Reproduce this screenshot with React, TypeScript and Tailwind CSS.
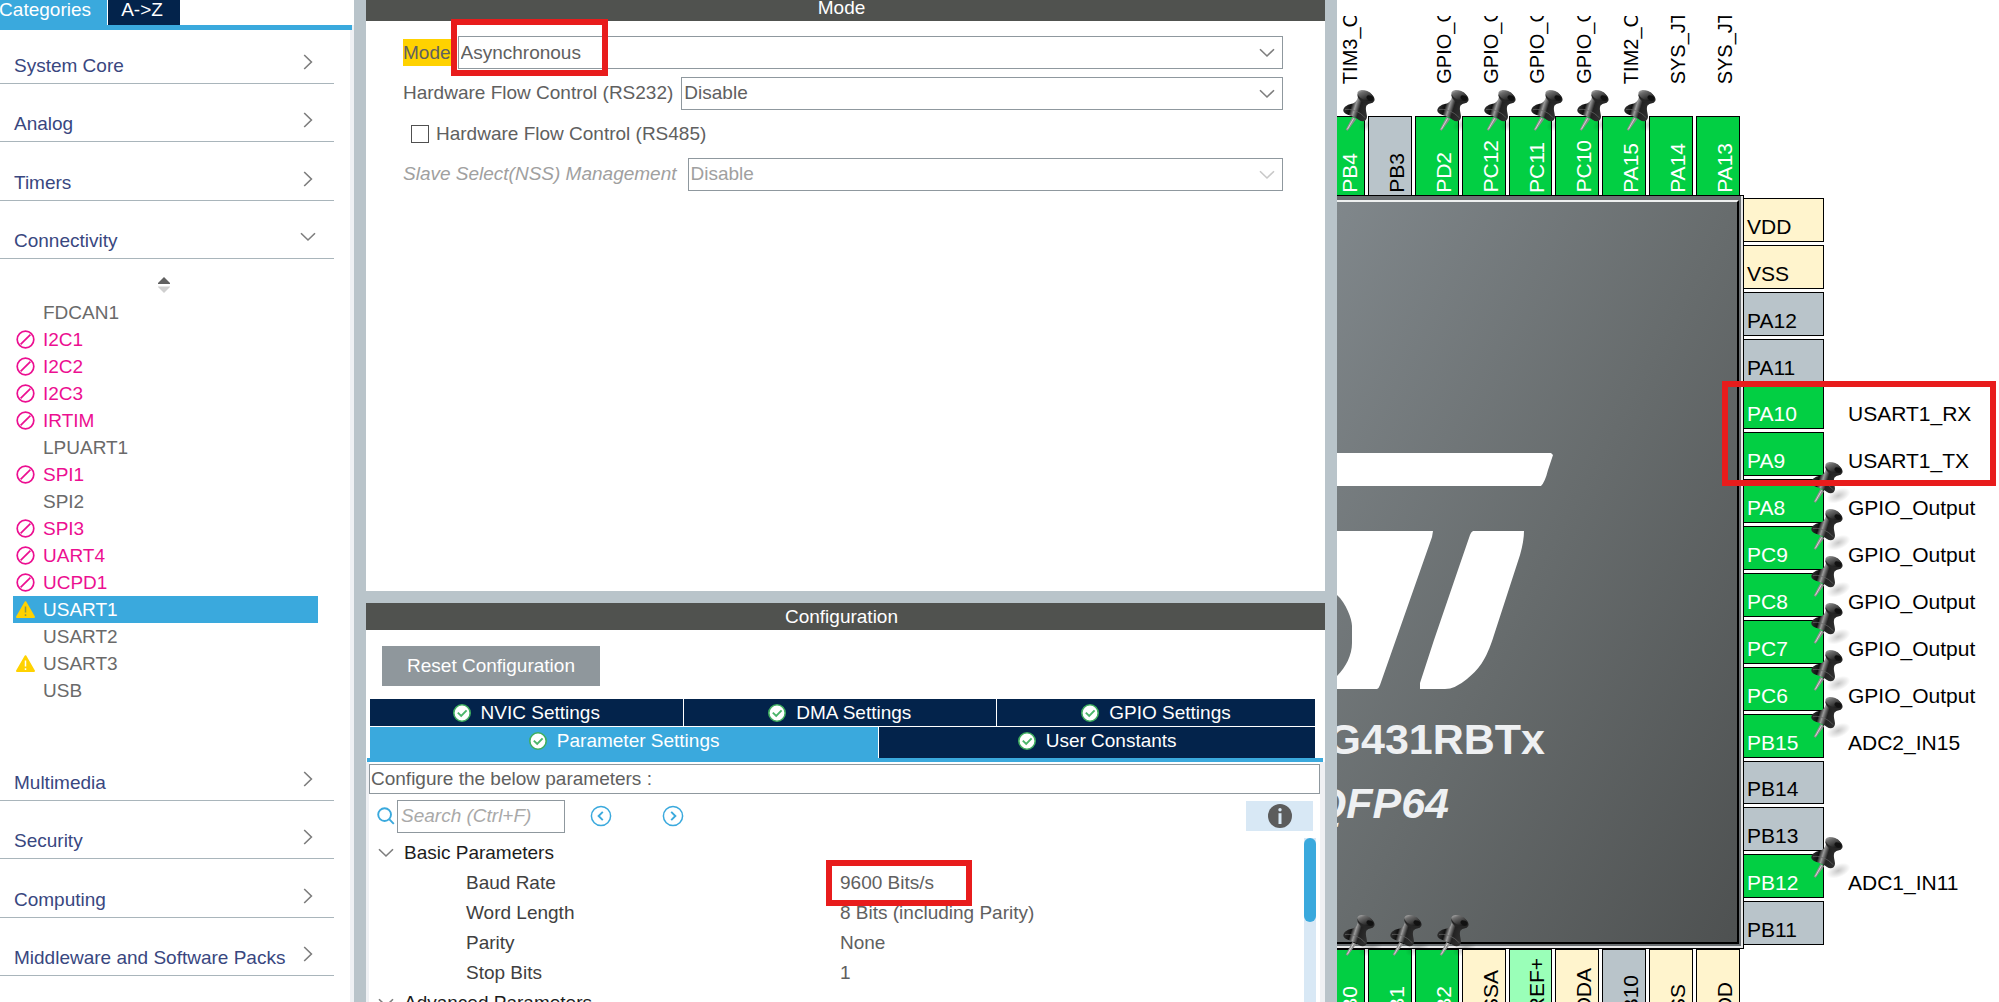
import React from "react";

type Tone = "green" | "gray" | "cream" | "mint";
type PinData = { name: string; tone: Tone; pinned?: boolean; label?: string };

const tones: Record<Tone, string> = {
  green: "bg-[#02cf43] text-white",
  gray: "bg-[#b9c4ca] text-black",
  cream: "bg-[#fff4cd] text-black",
  mint: "bg-[#9affb8] text-black",
};

const topPins: PinData[] = [
  { name: "PB4", tone: "green", pinned: true, label: "TIM3_C" },
  { name: "PB3", tone: "gray" },
  { name: "PD2", tone: "green", pinned: true, label: "GPIO_O" },
  { name: "PC12", tone: "green", pinned: true, label: "GPIO_O" },
  { name: "PC11", tone: "green", pinned: true, label: "GPIO_O" },
  { name: "PC10", tone: "green", pinned: true, label: "GPIO_O" },
  { name: "PA15", tone: "green", pinned: true, label: "TIM2_C" },
  { name: "PA14", tone: "green", label: "SYS_JT" },
  { name: "PA13", tone: "green", label: "SYS_JT" },
];

const rightPins: PinData[] = [
  { name: "VDD", tone: "cream" },
  { name: "VSS", tone: "cream" },
  { name: "PA12", tone: "gray" },
  { name: "PA11", tone: "gray" },
  { name: "PA10", tone: "green", label: "USART1_RX" },
  { name: "PA9", tone: "green", label: "USART1_TX" },
  { name: "PA8", tone: "green", pinned: true, label: "GPIO_Output" },
  { name: "PC9", tone: "green", pinned: true, label: "GPIO_Output" },
  { name: "PC8", tone: "green", pinned: true, label: "GPIO_Output" },
  { name: "PC7", tone: "green", pinned: true, label: "GPIO_Output" },
  { name: "PC6", tone: "green", pinned: true, label: "GPIO_Output" },
  { name: "PB15", tone: "green", pinned: true, label: "ADC2_IN15" },
  { name: "PB14", tone: "gray" },
  { name: "PB13", tone: "gray" },
  { name: "PB12", tone: "green", pinned: true, label: "ADC1_IN11" },
  { name: "PB11", tone: "gray" },
];

const bottomPins: PinData[] = [
  { name: "PB0", tone: "green", pinned: true },
  { name: "PB1", tone: "green", pinned: true },
  { name: "PB2", tone: "green", pinned: true },
  { name: "VSSA", tone: "cream" },
  { name: "VREF+", tone: "mint" },
  { name: "VDDA", tone: "cream" },
  { name: "PB10", tone: "gray" },
  { name: "VSS", tone: "cream" },
  { name: "VDD", tone: "cream" },
];

type Status = "blocked" | "warning" | "none";
const peripherals: { name: string; status: Status; selected?: boolean }[] = [
  { name: "FDCAN1", status: "none" },
  { name: "I2C1", status: "blocked" },
  { name: "I2C2", status: "blocked" },
  { name: "I2C3", status: "blocked" },
  { name: "IRTIM", status: "blocked" },
  { name: "LPUART1", status: "none" },
  { name: "SPI1", status: "blocked" },
  { name: "SPI2", status: "none" },
  { name: "SPI3", status: "blocked" },
  { name: "UART4", status: "blocked" },
  { name: "UCPD1", status: "blocked" },
  { name: "USART1", status: "warning", selected: true },
  { name: "USART2", status: "none" },
  { name: "USART3", status: "warning" },
  { name: "USB", status: "none" },
];

const parameters = [
  { name: "Baud Rate", value: "9600 Bits/s", marked: true },
  { name: "Word Length", value: "8 Bits (including Parity)" },
  { name: "Parity", value: "None" },
  { name: "Stop Bits", value: "1" },
];

function ChevronDown({ className = "" }: { className?: string }) {
  return (
    <svg viewBox="0 0 16 10" className={"h-[10px] w-4 " + className} fill="none" stroke="currentColor" strokeWidth="1.6">
      <path d="M1 1.2 L8 8 L15 1.2" />
    </svg>
  );
}

function ChevronRight({ className = "" }: { className?: string }) {
  return (
    <svg viewBox="0 0 10 16" className={"h-4 w-[10px] " + className} fill="none" stroke="currentColor" strokeWidth="1.6">
      <path d="M1.2 1 L8.4 8 L1.2 15" />
    </svg>
  );
}

function CheckBadge() {
  return (
    <svg viewBox="0 0 18 18" className="size-[18px] shrink-0">
      <circle cx="9" cy="9" r="8.2" fill="#fff" stroke="#3fae5f" strokeWidth="1.6" />
      <path d="M4.8 8.6 L8.2 12 L13.6 6.4" fill="none" stroke="#4bb56a" strokeWidth="1.9" />
    </svg>
  );
}

function StatusIcon({ status, selected }: { status: Status; selected?: boolean }) {
  if (status === "blocked")
    return (
      <svg viewBox="0 0 19 19" className="size-[19px]" fill="none" stroke="#ec0f91" strokeWidth="1.7">
        <circle cx="9.5" cy="9.5" r="8.3" />
        <path d="M4.6 14.4 L14.4 4.6" />
      </svg>
    );
  if (status === "warning")
    return (
      <svg viewBox="0 0 19 19" className="size-[19px]">
        <path d="M9.5 2.2 L18 17 H1 Z" fill="#ffd200" stroke="#ffd200" strokeWidth="2" strokeLinejoin="round" />
        <path d="M9.5 6.5 V12.6 M9.5 14.2 V16" stroke={selected ? "#8a9a4a" : "#fff"} strokeWidth="1.5" />
      </svg>
    );
  return null;
}

function PushPin({ className }: { className: string }) {
  return (
    <svg viewBox="0 0 120 129" className={"pointer-events-none absolute h-[43px] w-10 " + className}>
      <defs>
        <linearGradient id="pinHead" x1="0" y1="0" x2="1" y2="0.5">
          <stop offset="0" stopColor="#cfcfcf" />
          <stop offset="0.35" stopColor="#6d6d6d" />
          <stop offset="1" stopColor="#161616" />
        </linearGradient>
        <linearGradient id="pinBody" x1="0" y1="0.3" x2="1" y2="0.6">
          <stop offset="0" stopColor="#3a3a3a" />
          <stop offset="0.3" stopColor="#111" />
          <stop offset="0.45" stopColor="#9a9a9a" />
          <stop offset="0.62" stopColor="#222" />
          <stop offset="1" stopColor="#333" />
        </linearGradient>
        <radialGradient id="pinShade">
          <stop offset="0" stopColor="#000" stopOpacity="0.22" />
          <stop offset="1" stopColor="#000" stopOpacity="0" />
        </radialGradient>
      </defs>
      <ellipse cx="82" cy="104" rx="38" ry="20" transform="rotate(-22 82 104)" fill="url(#pinShade)" />
      <path d="M28 84 L8 122 L14 125 L40 90 Z" fill="#8d8d8d" />
      <path d="M32 88 L13 121" stroke="#d6d6d6" strokeWidth="3" />
      <path
        d="M46 20 C42 36 36 42 26 44 C10 47 0 56 1 66 C3 78 32 80 48 93 C58 101 71 97 72 84 C72 72 66 62 70 50 L80 42 Z"
        fill="url(#pinBody)"
      />
      <path d="M6 62 C20 58 50 66 66 86" fill="none" stroke="#6a6a6a" strokeWidth="3" opacity="0.7" />
      <ellipse cx="69" cy="25" rx="27" ry="17" transform="rotate(24 69 25)" fill="#262626" />
      <ellipse cx="67" cy="19" rx="25" ry="14" transform="rotate(24 67 19)" fill="url(#pinHead)" />
      <ellipse cx="81" cy="27" rx="11" ry="7" transform="rotate(24 81 27)" fill="#111" />
    </svg>
  );
}

function VerticalPin({ pin, edge }: { pin: PinData; edge: "top" | "bottom" }) {
  return (
    <div className={"relative flex h-20 items-end justify-end border border-black pr-[2px] pb-[2px] " + tones[pin.tone]}>
      <span className="rotate-180 text-[21px] leading-6 whitespace-nowrap [writing-mode:vertical-rl]">{pin.name}</span>
      {pin.pinned && <PushPin className={edge === "top" ? "-top-7 left-[21px]" : "-top-9 left-[21px]"} />}
    </div>
  );
}

function SettingsTab({ label, className }: { label: string; className: string }) {
  return (
    <button type="button" className={"flex items-center justify-center gap-[10px] text-white " + className}>
      <CheckBadge />
      {label}
    </button>
  );
}

function NavSection({ label, open }: { label: string; open?: boolean }) {
  return (
    <button
      type="button"
      className="mr-5 flex flex-1 items-end justify-between border-b border-[#a9b5bb] pr-[21px] pb-[5px] pl-[14px] text-left text-[#39477f]"
    >
      <span>{label}</span>
      {open ? (
        <ChevronDown className="-mr-[3px] mb-[11px] text-[#7d7d7d]" />
      ) : (
        <ChevronRight className="mb-2 text-[#7d7d7d]" />
      )}
    </button>
  );
}

function SelectBox({ id, value, disabled, marked }: { id: string; value: string; disabled?: boolean; marked?: boolean }) {
  return (
    <div className="relative h-[33px] flex-1">
      <select
        id={id}
        disabled={disabled}
        defaultValue={value}
        className={
          "h-full w-full appearance-none border border-[#8f989e] bg-white pl-[2px] " +
          (disabled ? "text-[#a0a0a0] opacity-100" : "text-[#606060]")
        }
      >
        <option>{value}</option>
      </select>
      <ChevronDown
        className={"pointer-events-none absolute top-[12px] right-2 " + (disabled ? "text-[#c8c8c8]" : "text-[#7d7d7d]")}
      />
      {marked && <div className="pointer-events-none absolute -top-[17px] -left-[7px] h-[57px] w-[157px] border-6 border-[#e81c1c]" />}
    </div>
  );
}

function Sidebar() {
  return (
    <nav className="flex w-[354px] shrink-0 flex-col bg-white">
      <div className="z-10 flex h-[25px] w-[352px] shrink-0 items-end gap-px shadow-[0_5px_0_#3aa9dd]">
        <button type="button" className="h-[31px] w-[107px] shrink-0 bg-[#3aa9dd] pr-4 text-white">
          <span className="flex justify-end">Categories</span>
        </button>
        <button type="button" className="h-[31px] w-[72px] bg-[#03234b] pr-1 text-white">
          {"A->Z"}
        </button>
      </div>
      <div className="flex flex-1 flex-col border-r-4 border-[#eff1f4]">
        <div className="-mr-1 flex h-[234px] flex-col">
          <NavSection label="System Core" />
          <NavSection label="Analog" />
          <NavSection label="Timers" />
          <NavSection label="Connectivity" open />
        </div>
        <div className="flex h-10 items-center pt-3 pl-[158px]">
          <svg viewBox="0 0 12 16" className="h-4 w-3">
            <path d="M6 0 L12 6 V7 H0 V6 Z" fill="#606060" />
            <path d="M6 16 L12 10 V9.5 H0 V10 Z" fill="#cfcfcf" />
          </svg>
        </div>
        <ul className="pr-8 pl-[13px]">
          {peripherals.map((p) => (
            <li key={p.name}>
              <button
                type="button"
                className={
                  "flex h-[27px] w-full items-center gap-2 pl-[3px] text-left " +
                  (p.selected ? "bg-[#3aa9dd] text-white" : p.status === "blocked" ? "text-[#ec0f91]" : "text-[#6a6a6a]")
                }
              >
                <span className="w-[19px]">
                  <StatusIcon status={p.status} selected={p.selected} />
                </span>
                {p.name}
              </button>
            </li>
          ))}
        </ul>
        <div className="mt-[38px] -mr-1 flex h-[234px] flex-col">
          <NavSection label="Multimedia" />
          <NavSection label="Security" />
          <NavSection label="Computing" />
          <NavSection label="Middleware and Software Packs" />
        </div>
      </div>
    </nav>
  );
}

function ModePanel() {
  return (
    <section className="flex h-[591px] shrink-0 flex-col bg-white">
      <h2 className="flex h-[21px] items-end justify-center bg-[#50524f] pr-2 text-white">
        <span className="leading-[26px]">Mode</span>
      </h2>
      <div className="mt-[15px] mr-[42px] ml-[37px] flex h-[155px] flex-col justify-between text-[#606060]">
        <div className="flex items-center gap-[7px]">
          <label htmlFor="mode" className="bg-[#ffd200] leading-[27px]">
            Mode
          </label>
          <SelectBox id="mode" value="Asynchronous" marked />
        </div>
        <div className="flex items-center gap-2">
          <label htmlFor="rs232">Hardware Flow Control (RS232)</label>
          <SelectBox id="rs232" value="Disable" />
        </div>
        <div className="flex h-[33px] items-center gap-[7px] pl-2">
          <input id="rs485" type="checkbox" className="size-[18px] appearance-none border border-[#505050] bg-white" />
          <label htmlFor="rs485">Hardware Flow Control (RS485)</label>
        </div>
        <div className="flex items-center gap-[11px]">
          <label htmlFor="nss" className="text-[#a0a0a0] italic">
            Slave Select(NSS) Management
          </label>
          <SelectBox id="nss" value="Disable" disabled />
        </div>
      </div>
    </section>
  );
}

function ConfigPanel() {
  return (
    <section className="flex min-h-0 flex-1 flex-col overflow-hidden bg-white">
      <h2 className="flex h-[27px] shrink-0 items-center justify-center bg-[#50524f] pr-2 text-white">Configuration</h2>
      <button type="button" className="mt-4 ml-4 h-10 w-[218px] shrink-0 bg-[#8f979c] text-white">
        Reset Configuration
      </button>
      <div className="mt-[13px] mr-[10px] ml-1 flex h-[27px] shrink-0 gap-px">
        <SettingsTab label="NVIC Settings" className="flex-1 bg-[#03234b]" />
        <SettingsTab label="DMA Settings" className="flex-1 bg-[#03234b]" />
        <SettingsTab label="GPIO Settings" className="w-[318px] bg-[#03234b]" />
      </div>
      <div className="mt-px mr-[10px] ml-1 flex h-[31px] shrink-0 gap-px">
        <SettingsTab label="Parameter Settings" className="flex-7 bg-[#3aa9dd] pb-1" />
        <SettingsTab label="User Constants" className="flex-6 bg-[#03234b] pb-1" />
      </div>
      <div className="mr-[2px] ml-px h-1 shrink-0 bg-[#3aa9dd]" />
      <div className="flex min-h-0 flex-1 flex-col border-r-5 border-l-3 border-[#eff1f4] pt-[2px]">
        <p className="h-[30px] shrink-0 border border-[#8f989e] pl-px leading-[28px] text-[#606060]">
          Configure the below parameters :
        </p>
        <div className="flex h-11 shrink-0 items-center pr-[7px] pl-2">
          <svg viewBox="0 0 18 18" className="size-[18px]" fill="none" stroke="#3aa9dd" strokeWidth="1.9">
            <circle cx="7.6" cy="7.6" r="6.4" />
            <path d="M12.4 12.4 L16.8 16.8" />
          </svg>
          <input
            type="text"
            aria-label="Search parameters"
            placeholder="Search (Ctrl+F)"
            className="ml-[2px] h-[33px] w-[168px] border border-[#8f989e] pl-[3px] placeholder:text-[#a9a9a9] placeholder:italic"
          />
          <button type="button" aria-label="Previous match" className="ml-[25px]">
            <svg viewBox="0 0 22 22" className="size-[22px]" fill="none" stroke="#3aa9dd" strokeWidth="1.5">
              <circle cx="11" cy="11" r="9.6" />
              <path d="M12.8 6.8 L8.6 11 L12.8 15.2" strokeWidth="1.9" />
            </svg>
          </button>
          <button type="button" aria-label="Next match" className="ml-[50px]">
            <svg viewBox="0 0 22 22" className="size-[22px]" fill="none" stroke="#3aa9dd" strokeWidth="1.5">
              <circle cx="11" cy="11" r="9.6" />
              <path d="M9.2 6.8 L13.4 11 L9.2 15.2" strokeWidth="1.9" />
            </svg>
          </button>
          <button type="button" aria-label="Information" className="ml-auto flex h-[30px] w-[67px] items-center justify-center bg-[#d8e8f5]">
            <svg viewBox="0 0 24 24" className="size-6">
              <circle cx="12" cy="12" r="12" fill="#5c5c5c" />
              <circle cx="12" cy="5.8" r="1.7" fill="#d8e8f5" />
              <path d="M12 9.2 V20" stroke="#d8e8f5" strokeWidth="3" />
            </svg>
          </button>
        </div>
        <div className="flex min-h-0 flex-1">
          <table className="h-fit flex-1 table-fixed border-collapse text-[#606060]">
            <colgroup>
              <col className="w-[471px]" />
              <col />
            </colgroup>
            <tbody>
              <tr className="h-[30px]">
                <th colSpan={2} scope="colgroup" className="p-0 text-left font-normal text-[#1c1c1c]">
                  <span className="flex items-center gap-[10px] pl-[9px]">
                    <ChevronDown className="text-[#7d7d7d]" />
                    Basic Parameters
                  </span>
                </th>
              </tr>
              {parameters.map((row) => (
                <tr key={row.name} className="h-[30px]">
                  <th scope="row" className="p-0 pl-[97px] text-left font-normal text-[#404040]">
                    {row.name}
                  </th>
                  <td className="relative p-0">
                    {row.value}
                    {row.marked && (
                      <span className="absolute -top-2 -left-[14px] z-10 h-[46px] w-[146px] border-6 border-[#e81c1c]" />
                    )}
                  </td>
                </tr>
              ))}
              <tr className="h-[30px]">
                <th colSpan={2} scope="colgroup" className="p-0 text-left font-normal text-[#1c1c1c]">
                  <span className="flex items-center gap-[10px] pl-[9px]">
                    <ChevronDown className="text-[#7d7d7d]" />
                    Advanced Parameters
                  </span>
                </th>
              </tr>
            </tbody>
          </table>
          <div className="mr-1 w-3 bg-[#d8e8f5]">
            <div className="h-[84px] rounded-full bg-[#3aa9dd]" />
          </div>
        </div>
      </div>
    </section>
  );
}

function ChipBody() {
  return (
    <div className="w-[407px] border-y border-r border-black">
      <div className="h-full border-r-2 border-b-2 border-[#e8e8e8] bg-[#6b7073] pt-1 pr-[2px] pb-[2px]">
        <div className="h-full border-t-2 border-r-2 border-b-2 border-t-[#eef0f0] border-r-black border-b-black bg-linear-to-br from-[#80878b] via-[#676c6d] to-[#4e5151] pt-[251px]">
          <svg viewBox="0 0 216 236" className="h-[236px] w-[216px] fill-white">
            <path d="M0 0 H214 L216 2 L211 17 Q208 29 204 33 H0 Z" />
            <path d="M0 78 H96 L95 84 L43 232 Q42 235 40 236 H0 V223 C9 214 15 202 15 190 V173 C15 166 9 150 0 142 Z" />
            <path d="M136 78 H187 Q187 88 183 102 L157 182 C149 208 141 217 130 226 Q118 236 108 236 H83 V230 L97 187 L123 111 L133 82 Q134 79 136 78 Z" />
          </svg>
          <div className="mt-[26px] flex w-[208px] justify-end overflow-hidden text-[43px] leading-[48px] font-bold text-[#eef0f2]">
            G431RBTx
          </div>
          <div className="mt-4 flex w-[112px] justify-end overflow-hidden text-[43px] leading-[48px] font-bold text-[#eef0f2] italic">
            QFP64
          </div>
        </div>
      </div>
    </div>
  );
}

function PinoutView() {
  return (
    <main className="flex w-[662px] shrink-0 flex-col overflow-hidden bg-white text-black">
      <div className="mt-4 flex h-[68px] w-[403px] shrink-0 justify-end">
        <div className="grid w-[419px] shrink-0 grid-cols-9 gap-[3px]">
          {topPins.map((pin) => (
            <div key={pin.name} className="flex h-[68px] items-end justify-end overflow-hidden pr-[3px]">
              <span className="rotate-180 text-[20px] leading-6 whitespace-nowrap [writing-mode:vertical-rl]">{pin.label}</span>
            </div>
          ))}
        </div>
      </div>
      <div className="mt-8 flex w-[403px] shrink-0 justify-end">
        <div className="grid w-[419px] shrink-0 grid-cols-9 gap-[3px]">
          {topPins.map((pin) => (
            <VerticalPin key={pin.name} pin={pin} edge="top" />
          ))}
        </div>
      </div>
      <div className="relative -mt-px flex h-[754px] shrink-0">
        <ChipBody />
        <div className="flex flex-1 flex-col gap-[3px] pt-[3px] pb-1">
          {rightPins.map((pin) => (
            <div key={pin.name} className="relative flex flex-1">
              <div className={"flex w-20 items-end border border-l-0 border-black pb-[2px] pl-[3px] text-[21px] leading-6 " + tones[pin.tone]}>
                {pin.name}
              </div>
              {pin.label && <span className="ml-6 self-end pb-[3px] text-[21px] leading-6">{pin.label}</span>}
              {pin.pinned && <PushPin className="-top-[18px] left-[67px]" />}
            </div>
          ))}
        </div>
        <div className="pointer-events-none absolute top-[186px] left-[385px] h-[105px] w-[274px] border-6 border-[#e81c1c]" />
      </div>
      <div className="flex w-[403px] shrink-0 justify-end">
        <div className="grid w-[419px] shrink-0 grid-cols-9 gap-[3px]">
          {bottomPins.map((pin) => (
            <VerticalPin key={pin.name} pin={pin} edge="bottom" />
          ))}
        </div>
      </div>
    </main>
  );
}

export default function App() {
  return (
    <div className='flex h-screen overflow-hidden bg-[#b9c4ca] font-["Liberation_Sans",Arial,sans-serif] text-[19px] leading-6'>
      <Sidebar />
      <div className="mx-3 flex min-w-0 flex-1 flex-col gap-3">
        <ModePanel />
        <ConfigPanel />
      </div>
      <PinoutView />
    </div>
  );
}
